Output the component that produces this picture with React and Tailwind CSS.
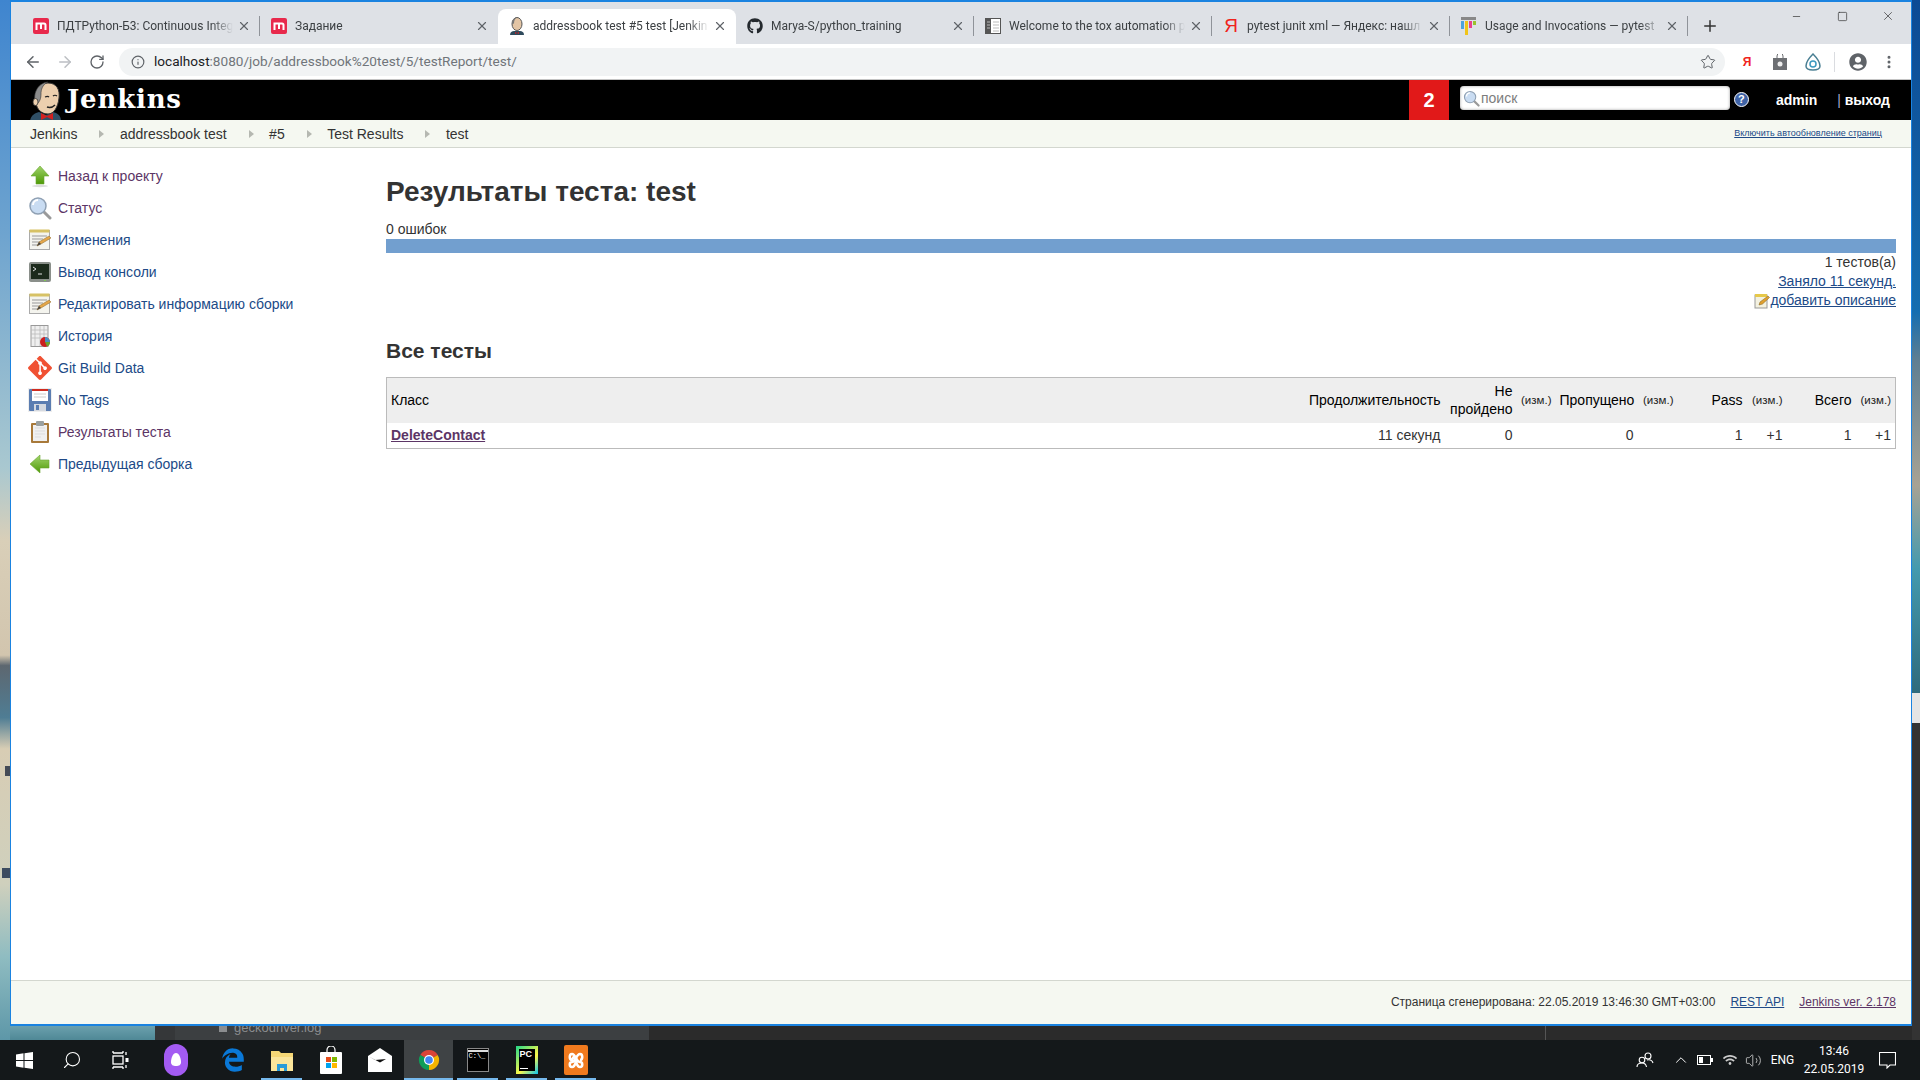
import { ArrowLeft, ArrowRight, RotateCw, Star, Info, X, Plus, Minus, Square, EllipsisVertical, ChevronUp, Search, Volume2 } from 'lucide-react'
import { FaGithub, FaEdgeLegacy, FaUserCircle, FaWifi } from 'react-icons/fa'
import { SiGit } from 'react-icons/si'

const SANS = { fontFamily: '"Liberation Sans", Arial, sans-serif' }

// favicons for the tab strip
const Mm = () => (
  <div className="w-4 h-4 rounded-[2px] bg-[#e8294c] flex items-center justify-center">
    <svg width="12" height="10" viewBox="0 0 12 10"><path d="M1.500 9V2.500h7.500a1.500 1.500 0 0 1 1.500 1.500V9M6 3v5" fill="none" stroke="#fff" strokeWidth="2" /></svg>
  </div>
)
const JenkinsFav = () => (
  <svg width="16" height="18" viewBox="0 0 16 18">
    <path d="M1 18c0-3 2-4 4-4h6c2 0 4 1 4 4z" fill="#2f4a5c" />
    <ellipse cx="8" cy="7" rx="5" ry="6.500" fill="#e3c5a5" stroke="#555" strokeWidth="1" />
    <path d="M3 7C3 3 5 .5 8 .5c-2 1-3 3-3 6z" fill="#777" />
    <path d="M6 15l2 1 2-1v2l-2-1-2 1z" fill="#c22" />
  </svg>
)
const ToxFav = () => (
  <svg width="16" height="16" viewBox="0 0 16 16">
    <rect x=".5" y=".5" width="15" height="15" fill="#fff" stroke="#555" />
    <rect x="1" y="1" width="5" height="14" fill="#555" />
    <path d="M2 4h3M2 7h3M2 10h3M8 4h6M8 7h6M8 10h6M8 13h6" stroke="#bbb" strokeWidth="1" />
  </svg>
)
const YaFav = () => (
  <span className="text-[#f0231d] text-[19px] leading-none font-normal w-4 text-center" style={SANS}>Я</span>
)
const PytestFav = () => (
  <svg width="16" height="18" viewBox="0 0 16 18">
    <rect x="0" y="0" width="15" height="3" fill="#888" />
    <rect x="0" y="4" width="3" height="8" fill="#4da3dd" />
    <rect x="4" y="4" width="3" height="14" fill="#f0c419" />
    <rect x="8" y="4" width="3" height="7" fill="#e8408f" />
    <rect x="12" y="4" width="3" height="4" fill="#9ac22c" />
  </svg>
)

// titles are what the 238px tab has room for, the rest fades out
const TABS = [
  { fav: <Mm />, title: 'ПДТPython-Б3: Continuous Integ', sep: true },
  { fav: <Mm />, title: 'Задание', sep: false },
  { fav: <JenkinsFav />, title: 'addressbook test #5 test [Jenkin', active: true, sep: false },
  { fav: <FaGithub size={16} color="#24292e" />, title: 'Marya-S/python_training', sep: true },
  { fav: <ToxFav />, title: 'Welcome to the tox automation p', sep: true },
  { fav: <YaFav />, title: 'pytest junit xml — Яндекс: нашл', sep: true },
  { fav: <PytestFav />, title: 'Usage and Invocations — pytest', sep: true },
]

const Tab = ({ fav, title, active, sep }) => (
  <div className={`w-[238px] h-[35px] pb-[2px] flex items-center pl-[11px] pr-[9px] relative ${active ? 'bg-white rounded-t-lg' : ''}`}>
    <div className="w-4 flex justify-center shrink-0">{fav}</div>
    <div className="flex-1 ml-2 overflow-hidden whitespace-nowrap text-[12px] text-[#3c4043] [mask-image:linear-gradient(90deg,#000_88%,transparent)]" style={{ fontFamily: 'Roboto, sans-serif' }}>{title}</div>
    <X size={14} strokeWidth={2} color="#5f6368" className="ml-1 shrink-0" />
    {sep && <div className="absolute right-0 top-[7px] h-5 w-px bg-[#8f9399]" />}
  </div>
)

// sidebar icons
const grad = (id, a, b) => (
  <linearGradient id={id} x1="0" y1="0" x2="0" y2="1"><stop offset="0" stopColor={a} /><stop offset="1" stopColor={b} /></linearGradient>
)
const UpIcon = () => (
  <svg width="24" height="24" viewBox="0 0 24 24">
    <defs>{grad('up', '#9fd36a', '#4e9a06')}</defs>
    <path d="M12 2l9 10h-5v8H8v-8H3z" fill="url(#up)" stroke="#6aa62f" strokeWidth=".6" />
    <ellipse cx="12" cy="22" rx="8" ry="1.200" fill="#ddd" />
  </svg>
)
const LeftIcon = () => (
  <svg width="24" height="24" viewBox="0 0 24 24">
    <defs>{grad('lf', '#a3d56e', '#4e9a06')}</defs>
    <path d="M2 12l10-9v5h9v8h-9v5z" fill="url(#lf)" stroke="#6aa62f" strokeWidth=".6" />
  </svg>
)
const LensIcon = ({ size = 24 }) => (
  <svg width={size} height={size} viewBox="0 0 24 24">
    <path d="M15 15l7 7" stroke="#9a9a9a" strokeWidth="3" strokeLinecap="round" />
    <circle cx="10" cy="10" r="8" fill="#c9dcf2" stroke="#8fa0b3" strokeWidth="1.500" />
    <path d="M5 9a5 5 0 0 1 5-5" stroke="#fff" strokeWidth="2" fill="none" />
  </svg>
)
const NotepadIcon = () => (
  <svg width="24" height="24" viewBox="0 0 24 24">
    <rect x="1.500" y="2.500" width="20" height="19" fill="#f4f4ee" stroke="#aaa" />
    <rect x="1.500" y="1.500" width="20" height="3" fill="#d7c265" />
    <path d="M4 8h15M4 11h11M4 14h8M4 17h6" stroke="#999" />
    <path d="M9 18l2-4 10-6 2 2-10 6z" fill="#e4a64a" stroke="#8a6a2a" strokeWidth=".5" />
    <path d="M9 18l2-4 2 2z" fill="#444" />
  </svg>
)
const ConsoleIcon = () => (
  <svg width="24" height="24" viewBox="0 0 24 24">
    <rect x="1" y="2" width="22" height="20" rx="2" fill="#8a8f8a" />
    <rect x="3" y="4" width="18" height="15" fill="#1c2a1c" />
    <path d="M5 7l3 2-3 2" stroke="#e0e0e0" fill="none" strokeWidth="1" />
    <path d="M10 14h4" stroke="#e0e0e0" />
    <rect x="16" y="20" width="2" height="1" fill="#7ec850" />
  </svg>
)
const HistoryIcon = () => (
  <svg width="24" height="24" viewBox="0 0 24 24">
    <rect x="3" y="1.500" width="17" height="21" fill="#efefef" stroke="#999" />
    <path d="M3 6h17M3 10h17M3 14h17M7 2v20M12 2v20M16 2v20" stroke="#bbb" strokeWidth=".8" />
    <circle cx="17" cy="18" r="5" fill="#cc1f1f" />
    <path d="M17 18v-5a5 5 0 0 1 5 5z" fill="#4e8fbf" />
    <path d="M17 18h5a5 5 0 0 1-3 4.500z" fill="#6aa62f" />
  </svg>
)
const FloppyIcon = () => (
  <svg width="24" height="24" viewBox="0 0 24 24">
    <rect x="0" y="0" width="24" height="24" fill="#eee" />
    <rect x="1" y="1" width="22" height="22" rx="1" fill="#5b7db1" />
    <rect x="4" y="1" width="16" height="12" fill="#fff" />
    <rect x="4" y="1" width="16" height="2" fill="#d02c20" />
    <path d="M6 6h12M6 9h12" stroke="#ccc" />
    <rect x="6" y="16" width="12" height="7" fill="#d5d9e0" />
    <rect x="8" y="17" width="3" height="5" fill="#5b7db1" />
  </svg>
)
const ClipboardIcon = () => (
  <svg width="24" height="24" viewBox="0 0 24 24">
    <rect x="3" y="3" width="18" height="20" rx="1" fill="#a8793a" />
    <rect x="5" y="5" width="14" height="16" fill="#f0f0f0" />
    <path d="M7 8h10M7 11h10M7 14h10M7 17h6" stroke="#ddd" />
    <rect x="8" y="1" width="8" height="5" rx="1" fill="#9aa0a0" />
  </svg>
)

const SIDE = [
  { icon: <UpIcon />, label: 'Назад к проекту', visited: true },
  { icon: <LensIcon />, label: 'Статус', visited: true },
  { icon: <NotepadIcon />, label: 'Изменения' },
  { icon: <ConsoleIcon />, label: 'Вывод консоли' },
  { icon: <NotepadIcon />, label: 'Редактировать информацию сборки' },
  { icon: <HistoryIcon />, label: 'История' },
  { icon: <SiGit size={24} color="#f05133" />, label: 'Git Build Data' },
  { icon: <FloppyIcon />, label: 'No Tags' },
  { icon: <ClipboardIcon />, label: 'Результаты теста', visited: true },
  { icon: <LeftIcon />, label: 'Предыдущая сборка' },
]

const CRUMBS = ['Jenkins', 'addressbook test', '#5', 'Test Results', 'test']

const JenkinsLogo = () => (
  <svg width="32" height="40" viewBox="0 0 32 40">
    <path d="M0 40c1-6 5-8 9-9l7 3 7-3c4 1 8 3 8 9z" fill="#2f4f66" />
    <path d="M6 22c0-12 3-20 12-20s12 7 11 15c-1 9-5 16-11 16-6 0-11-4-12-11z" fill="#eccfae" stroke="#333" strokeWidth="1" />
    <path d="M6 24C2 14 7 2 18 1c-6 3-7 8-7 12 0 4-1 8-5 11z" fill="#8c8c8c" stroke="#333" strokeWidth=".6" />
    <ellipse cx="5.500" cy="21" rx="2.500" ry="3.500" fill="#eccfae" stroke="#333" strokeWidth=".8" />
    <path d="M15 16c2-1 3-1 4 0M23 15c1-1 3-1 4 0" stroke="#222" strokeWidth="1.200" fill="none" />
    <path d="M17 26c3 1 6 0 8-2" stroke="#222" strokeWidth="1.600" fill="none" />
    <path d="M11 32l6 3 6-3v7l-6-3-6 3z" fill="#d2201f" />
  </svg>
)

const NoteSmall = () => (
  <svg width="16" height="16" viewBox="0 0 16 16">
    <rect x="1" y="2" width="12" height="13" fill="#f3f1e0" stroke="#999" />
    <rect x="1" y="1" width="12" height="3" fill="#e6c84a" />
    <path d="M5 12l1-3 8-6 1.500 1.500-7 6.500z" fill="#e0a030" stroke="#7a5a1a" strokeWidth=".5" />
  </svg>
)

// taskbar icons
const ChromeIcon = () => (
  <svg width="24" height="24" viewBox="0 0 24 24">
    <path d="M12 12L3.300 7A10 10 0 0 1 20.700 7z" fill="#db4437" />
    <path d="M12 12L20.700 7A10 10 0 0 1 12 22z" fill="#f4b400" />
    <path d="M12 12L12 22A10 10 0 0 1 3.300 7z" fill="#0f9d58" />
    <circle cx="12" cy="12" r="5" fill="#fff" />
    <circle cx="12" cy="12" r="3.800" fill="#4285f4" />
  </svg>
)
const WinLogo = () => (
  <svg width="17" height="17" viewBox="0 0 17 17" fill="#fff">
    <path d="M0 2.500L7.500 1.300V8H0zM8.500 1.200L17 0V8H8.500zM0 9h7.500v6.700L0 14.500zM8.500 9H17v8l-8.500-1.200z" />
  </svg>
)
const TaskViewIcon = () => (
  <svg width="18" height="20" viewBox="0 0 18 20" fill="none" stroke="#fff" strokeWidth="1.300">
    <rect x="2" y="6" width="10" height="8" />
    <path d="M2 3h10M2 1v2M12 1v2M2 17h10M2 19v-2M12 19v-2" />
    <rect x="14.500" y="8" width="3" height="4" fill="#fff" stroke="none" />
    <path d="M15 2v3M15 15v3" />
  </svg>
)
const AliceIcon = () => (
  <div className="w-6 h-8 rounded-full bg-[#a35bf2] flex items-center justify-center">
    <svg width="12" height="16" viewBox="0 0 12 16"><path d="M6 1c3 0 5 5 5 9 0 3-2 4-5 4s-5-1-5-4c0-4 2-9 5-9z" fill="#fff" /></svg>
  </div>
)
const FolderIcon = () => (
  <svg width="24" height="22" viewBox="0 0 24 22">
    <path d="M1 2h8l2 2h12v18H1z" fill="#f6d776" />
    <path d="M1 8h22v14H1z" fill="#fbe59b" />
    <path d="M7 15h10v7h-3v-3h-4v3H7z" fill="#2a9bd8" />
  </svg>
)
const StoreIcon = () => (
  <svg width="24" height="28" viewBox="0 0 24 28">
    <path d="M8 7V4a4 4 0 0 1 8 0v3" fill="none" stroke="#fff" strokeWidth="1.200" />
    <rect x="1" y="6" width="22" height="22" rx="1" fill="#fff" />
    <rect x="7" y="11" width="5" height="5" fill="#e74c1c" />
    <rect x="13" y="11" width="5" height="5" fill="#7fb900" />
    <rect x="7" y="17" width="5" height="5" fill="#00a3ee" />
    <rect x="13" y="17" width="5" height="5" fill="#ffb900" />
  </svg>
)
const MailIcon = () => (
  <svg width="24" height="24" viewBox="0 0 24 24">
    <path d="M0 8L12 0l12 8v16H0z" fill="#fff" />
    <path d="M1 8.500l11 6 6-3.500-11 1z" fill="#111" />
  </svg>
)
const CmdIcon = () => (
  <div className="w-[22px] h-[24px] bg-black border border-[#888] pt-[1px]">
    <div className="h-[2px] bg-[#ddd]" />
    <div className="text-[7px] leading-[9px] text-white pl-px font-mono">C:\_</div>
  </div>
)
const PyCharmIcon = () => (
  <div className="w-[22px] h-[28px] bg-[linear-gradient(135deg,#21d789,#fcf84a_60%,#07c3f2)] flex items-center justify-center">
    <div className="w-[16px] h-[22px] bg-black text-white text-[9px] leading-[11px] font-bold pl-px" style={SANS}>PC<div className="w-2 h-px bg-white mt-2" /></div>
  </div>
)
const XamppIcon = () => (
  <div className="w-6 h-[30px] rounded-[2px] bg-[#f07a1e] flex items-center justify-center">
    <svg width="18" height="18" viewBox="0 0 18 18" fill="none" stroke="#fff" strokeWidth="2.500">
      <path d="M5 9C2 9 2 3 5 3c2 0 3 2 4 4s2 4 4 4c3 0 3 5 0 5-2 0-3-2-4-5S7 3 5 9zM13 9c3 0 3-6 0-6-2 0-3 2-4 4s-2 4-4 4c-3 0-3 5 0 5 2 0 3-2 4-5" />
    </svg>
  </div>
)
const PeopleIcon = () => (
  <svg width="18" height="18" viewBox="0 0 18 18" fill="none" stroke="#fff" strokeWidth="1.100">
    <circle cx="12" cy="5" r="3" />
    <circle cx="6" cy="9" r="2.800" />
    <path d="M1 16c0-3 2-4 5-4s4 1 4.500 4M11 9c2-.5 5 0 6 3" />
  </svg>
)
const BatteryIcon = () => (
  <svg width="16" height="10" viewBox="0 0 16 10" fill="none" stroke="#fff">
    <rect x=".5" y=".5" width="13" height="9" />
    <rect x="2" y="2" width="4" height="6" fill="#fff" stroke="none" />
    <rect x="14" y="3" width="2" height="4" fill="#fff" stroke="none" />
  </svg>
)
const NotifIcon = () => (
  <svg width="17" height="17" viewBox="0 0 17 17" fill="none" stroke="#fff" strokeWidth="1.100">
    <path d="M.5.500h16v12.500H11l-3 3v-3H.5z" />
  </svg>
)

const TASK_APPS = [
  { icon: <FaEdgeLegacy size={24} color="#0a78d7" /> },
  { icon: <FolderIcon />, open: true },
  { icon: <StoreIcon /> },
  { icon: <MailIcon /> },
  { icon: <ChromeIcon />, open: true, active: true },
  { icon: <CmdIcon />, open: true },
  { icon: <PyCharmIcon />, open: true },
  { icon: <XamppIcon />, open: true },
]

const TH = 'font-normal text-right px-1 align-middle text-[14px] leading-[18px] text-black'
const TH_LEFT = 'font-normal text-left px-1 align-middle text-[14px] leading-[18px] text-black'
const SMALL = 'font-normal text-right pr-1 pl-0 align-middle text-[11.5px] text-[#222]'
const TD = 'text-right px-1 text-[14px] text-[#333]'

export default function App() {
  return (
    <div className="w-[1920px] h-[1080px] flex flex-col overflow-hidden" style={SANS}>
      <div className="h-[1040px] flex">
        {/* wallpaper, left */}
        <div className="w-[10px] relative bg-[linear-gradient(180deg,#3f85cf_0%,#6da3cf_22%,#a9c8d0_45%,#d9cfb8_52%,#d2c5ae_63%,#5d6770_64%,#4f7d94_69%,#d8cdb4_72%,#cfd0bd_85%,#8fbcc1_92%,#5d97a8_100%)]">
          <div className="absolute left-[5px] top-[766px] w-[5px] h-[10px] bg-[#444a55]" />
          <div className="absolute left-[2px] top-[868px] w-[8px] h-[10px] bg-[#3d4c60]" />
        </div>

        <div className="w-[1902px] flex flex-col">
          {/* browser window */}
          <div className="h-[1026px] flex flex-col border-x border-y-2 border-[#1a83e0] bg-white">
            {/* tab strip */}
            <div className="h-[42px] bg-[#dee1e6] flex items-end pl-[11px]">
              {TABS.map(t => <Tab key={t.title} {...t} />)}
              <Plus size={18} strokeWidth={2} color="#333" className="ml-[13px] mb-[9px]" />
              <div className="ml-auto self-start flex items-start pt-[6px] text-[#333]">
                <Minus size={11} strokeWidth={1.500} className="mr-[35px] mt-[3px]" />
                <Square size={11} strokeWidth={1.500} className="mr-[33px] mt-[3px]" />
                <X size={14} strokeWidth={1.200} className="mr-[16px] mt-[1px]" />
              </div>
            </div>

            {/* toolbar */}
            <div className="h-[36px] bg-white border-b border-[#c4c4c4] flex items-center pl-[13px] pr-[13px]">
              <ArrowLeft size={18} strokeWidth={2} color="#5f6368" />
              <ArrowRight size={18} strokeWidth={2} color="#bcbfc3" className="ml-[14px]" />
              <RotateCw size={16} strokeWidth={2} color="#5f6368" className="ml-[15px]" />
              <div className="ml-[14px] w-[1606px] h-[28px] rounded-full bg-[#f1f3f4] flex items-center pl-[12px] pr-[9px]">
                <Info size={14} strokeWidth={2} color="#5f6368" />
                <span className="ml-[9px] text-[13.6px] text-[#202124]" style={{ fontFamily: 'Roboto, sans-serif' }}>
                  localhost<span className="text-[#70757a]">:8080/job/addressbook%20test/5/testReport/test/</span>
                </span>
                <Star size={16} strokeWidth={1.500} color="#5f6368" className="ml-auto" />
              </div>
              <span className="ml-[14px] w-4 text-center text-[12px] font-bold text-[#f0231d]">Я</span>
              <svg className="ml-[17px]" width="16" height="16" viewBox="0 0 16 16"><path d="M1 4h14v12H1z" fill="#6d6f73" /><path d="M5 4V2a3 3 0 0 1 6 0v2" fill="none" stroke="#6d6f73" /><circle cx="8" cy="10" r="2.500" fill="#eee" /></svg>
              <svg className="ml-[17px]" width="16" height="18" viewBox="0 0 16 18"><path d="M8 1c3 3 7 8 7 12 0 3-3 4-7 4s-7-1-7-4c0-4 4-9 7-12z" fill="none" stroke="#4a7f93" strokeWidth="1.500" /><circle cx="8" cy="11" r="3" fill="none" stroke="#3d9ac0" strokeWidth="1.500" /></svg>
              <div className="ml-[13px] w-px h-5 bg-[#dadce0]" />
              <FaUserCircle size={18} color="#5f6368" className="ml-[14px]" />
              <EllipsisVertical size={16} strokeWidth={2.500} color="#5f6368" className="ml-[14px]" />
            </div>

            {/* jenkins header */}
            <div className="h-[40px] bg-black flex items-stretch">
              <div className="ml-[19px] mt-[1px] shrink-0"><JenkinsLogo /></div>
              <span className="ml-[5px] self-center text-white text-[26px] leading-none font-bold tracking-[.8px] mb-[2px]" style={{ fontFamily: '"DejaVu Serif", serif' }}>Jenkins</span>
              <div className="ml-auto w-[40px] bg-[#e11919] flex items-center justify-center text-white font-bold text-[20px]">2</div>
              <div className="ml-[11px] self-center mb-[4px] w-[270px] h-[24px] rounded-[4px] bg-white flex items-center pl-[3px] shadow-[inset_0_0_3px_#999]">
                <LensIcon size={17} />
                <span className="ml-[1px] text-[14px] text-[#7d7d7d]">поиск</span>
              </div>
              <div className="ml-[4px] self-center mb-[2px] w-[15px] h-[15px] rounded-full bg-[#3f63a6] border border-white flex items-center justify-center text-white text-[11px] font-bold">?</div>
              <span className="ml-[27px] self-center text-white text-[14px] font-bold">admin</span>
              <span className="ml-[20px] self-center text-white text-[14px] font-bold"><span className="font-normal text-[#aac]">|</span> выход</span>
              <div className="w-[21px]" />
            </div>

            {/* breadcrumbs */}
            <div className="h-[28px] pt-[1px] bg-[#f5f8f1] border-b border-[#d3d7cf] flex items-center pl-[19px] pr-[29px] text-[14px] text-[#333]">
              {CRUMBS.map((c, i) => (
                <div key={c} className="flex items-center">
                  <span>{c}</span>
                  {i < CRUMBS.length - 1 && (
                    <svg className="ml-[22px] mr-[15.500px]" width="5" height="8" viewBox="0 0 5 8"><path d="M0 0l5 4-5 4z" fill="#b5b8b1" /></svg>
                  )}
                </div>
              ))}
              <a className="ml-auto text-[9px] text-[#204a87] underline">Включить автообновление страниц</a>
            </div>

            {/* page */}
            <div className="flex-1 flex min-h-0">
              <div className="w-[375px] shrink-0 pt-[12px] pl-[17px]">
                {SIDE.map(s => (
                  <div key={s.label} className="h-8 flex items-center">
                    <div className="w-6 h-6 flex items-center justify-center shrink-0">{s.icon}</div>
                    <span className={`ml-[6px] text-[14px] ${s.visited ? 'text-[#5c3566]' : 'text-[#204a87]'}`}>{s.label}</span>
                  </div>
                ))}
              </div>
              <div className="flex-1 min-w-0 pr-[15px] pt-[27px] text-[#333]">
                <h1 className="text-[28px] leading-[34px] font-bold">Результаты теста: test</h1>
                <div className="mt-[11px] text-[14px] leading-[19px]">0 ошибок</div>
                <div className="h-[14px] bg-[#729fcf]" />
                <div className="text-right text-[14px] leading-[19px]">1 тестов(а)</div>
                <div className="text-right text-[14px] leading-[19px] text-[#204a87] underline">Заняло 11 секунд.</div>
                <div className="flex justify-end items-center text-[14px] leading-[19px] text-[#204a87]">
                  <NoteSmall />
                  <span className="underline">добавить описание</span>
                </div>
                <h2 className="mt-[29px] text-[21px] leading-[24px] font-bold">Все тесты</h2>
                <table className="mt-[14px] w-[1509px] table-fixed border-collapse border border-[#bbb]">
                  <colgroup>
                    <col className="w-[918px]" />
                    <col className="w-[140px]" />
                    <col className="w-[72px]" />
                    <col className="w-[39px]" />
                    <col className="w-[82px]" />
                    <col className="w-[40px]" />
                    <col className="w-[69px]" />
                    <col className="w-[40px]" />
                    <col className="w-[69px]" />
                    <col className="w-[40px]" />
                  </colgroup>
                  <thead>
                    <tr className="h-[45px] bg-[#eee]">
                      <th className={TH_LEFT}>Класс</th>
                      <th className={TH}>Продолжительность</th>
                      <th className={TH}>Не пройдено</th>
                      <th className={SMALL}>(изм.)</th>
                      <th className={TH}>Пропущено</th>
                      <th className={SMALL}>(изм.)</th>
                      <th className={TH}>Pass</th>
                      <th className={SMALL}>(изм.)</th>
                      <th className={TH}>Всего</th>
                      <th className={SMALL}>(изм.)</th>
                    </tr>
                  </thead>
                  <tbody>
                    <tr className="h-[26px]">
                      <td className="px-1 text-[14px] font-bold text-[#5c3566] underline">DeleteContact</td>
                      <td className={TD}>11 секунд</td>
                      <td className={TD}>0</td>
                      <td className={TD}></td>
                      <td className={TD}>0</td>
                      <td className={TD}></td>
                      <td className={TD}>1</td>
                      <td className={TD}>+1</td>
                      <td className={TD}>1</td>
                      <td className={TD}>+1</td>
                    </tr>
                  </tbody>
                </table>
              </div>
            </div>

            {/* footer */}
            <div className="h-[44px] bg-[#f5f8f1] border-t border-[#d3d7cf] flex items-center justify-end pr-[15px] pb-[2px] text-[12px] text-[#333]">
              <span>Страница сгенерирована: 22.05.2019 13:46:30 GMT+03:00</span>
              <a className="ml-[15px] text-[#204a87] underline">REST API</a>
              <a className="ml-[15px] text-[#5c3566] underline">Jenkins ver. 2.178</a>
            </div>
          </div>

          {/* what shows of the IDE below the window */}
          <div className="flex-1 flex min-h-0 overflow-hidden">
            <div className="w-[145px] bg-[linear-gradient(180deg,#6ba0ad,#4f8896)]" />
            <div className="w-[20px] bg-[#353739]" />
            <div className="w-[474px] bg-[#3c3f41] flex items-start pl-[44px] gap-[7px] text-[13px] leading-[13px] text-[#8b8d8f]">
              <div className="w-2 h-[10px] -mt-[4px] bg-[#8b8d8f]" />
              <span className="-mt-[5px]">geckodriver.log</span>
            </div>
            <div className="flex-1 bg-[#2b2b2b]">
              <div className="ml-[896px] w-px h-full bg-[#555]" />
            </div>
          </div>
        </div>

        {/* wallpaper and IDE, right */}
        <div className="w-[8px] flex flex-col">
          <div className="h-[693px] bg-[linear-gradient(180deg,#0c4a94_0%,#156db0_45%,#5f7f92_52%,#a7a294_70%,#449aae_82%,#2f6a7c_100%)]" />
          <div className="h-[30px] bg-[#e4e4e4]" />
          <div className="flex-1 bg-[#333]" />
        </div>
      </div>

      {/* taskbar */}
      <div className="h-[40px] bg-[#14181a] flex items-stretch text-white">
        <div className="w-[48px] flex items-center justify-center"><WinLogo /></div>
        <div className="w-[47px] flex items-center justify-center"><Search size={20} strokeWidth={1.300} className="-scale-x-100" /></div>
        <div className="w-[49px] flex items-center justify-center"><TaskViewIcon /></div>
        <div className="ml-[7px] w-[50px] flex items-center justify-center"><AliceIcon /></div>
        <div className="w-[7px]" />
        {TASK_APPS.map((a, i) => (
          <div key={i} className={`w-[49px] relative flex items-center justify-center ${a.active ? 'bg-[#3f4345]' : ''}`}>
            {a.icon}
            {a.open && <div className={`absolute bottom-0 h-[2px] bg-[#76b9ed] ${a.active ? 'inset-x-0' : 'inset-x-1'}`} />}
          </div>
        ))}
        <div className="ml-auto w-[36px] flex items-center justify-center"><PeopleIcon /></div>
        <div className="ml-[6px] w-[24px] flex items-center justify-center"><ChevronUp size={18} strokeWidth={1.300} /></div>
        <div className="w-[24px] flex items-center justify-center"><BatteryIcon /></div>
        <div className="w-[25px] flex items-center justify-center"><FaWifi size={14} color="#ccc" /></div>
        <div className="w-[23px] flex items-center justify-center"><Volume2 size={17} strokeWidth={1.200} color="#ccc" /></div>
        <div className="w-[35px] flex items-center justify-center text-[12px]" style={{ fontFamily: 'Roboto, sans-serif' }}>ENG</div>
        <div className="w-[68px] flex flex-col items-center justify-center text-[12px] leading-[18px]" style={{ fontFamily: 'Roboto, sans-serif' }}>
          <span>13:46</span>
          <span>22.05.2019</span>
        </div>
        <div className="w-[38px] flex items-center justify-center"><NotifIcon /></div>
        <div className="w-[14px]" />
      </div>
    </div>
  )
}
